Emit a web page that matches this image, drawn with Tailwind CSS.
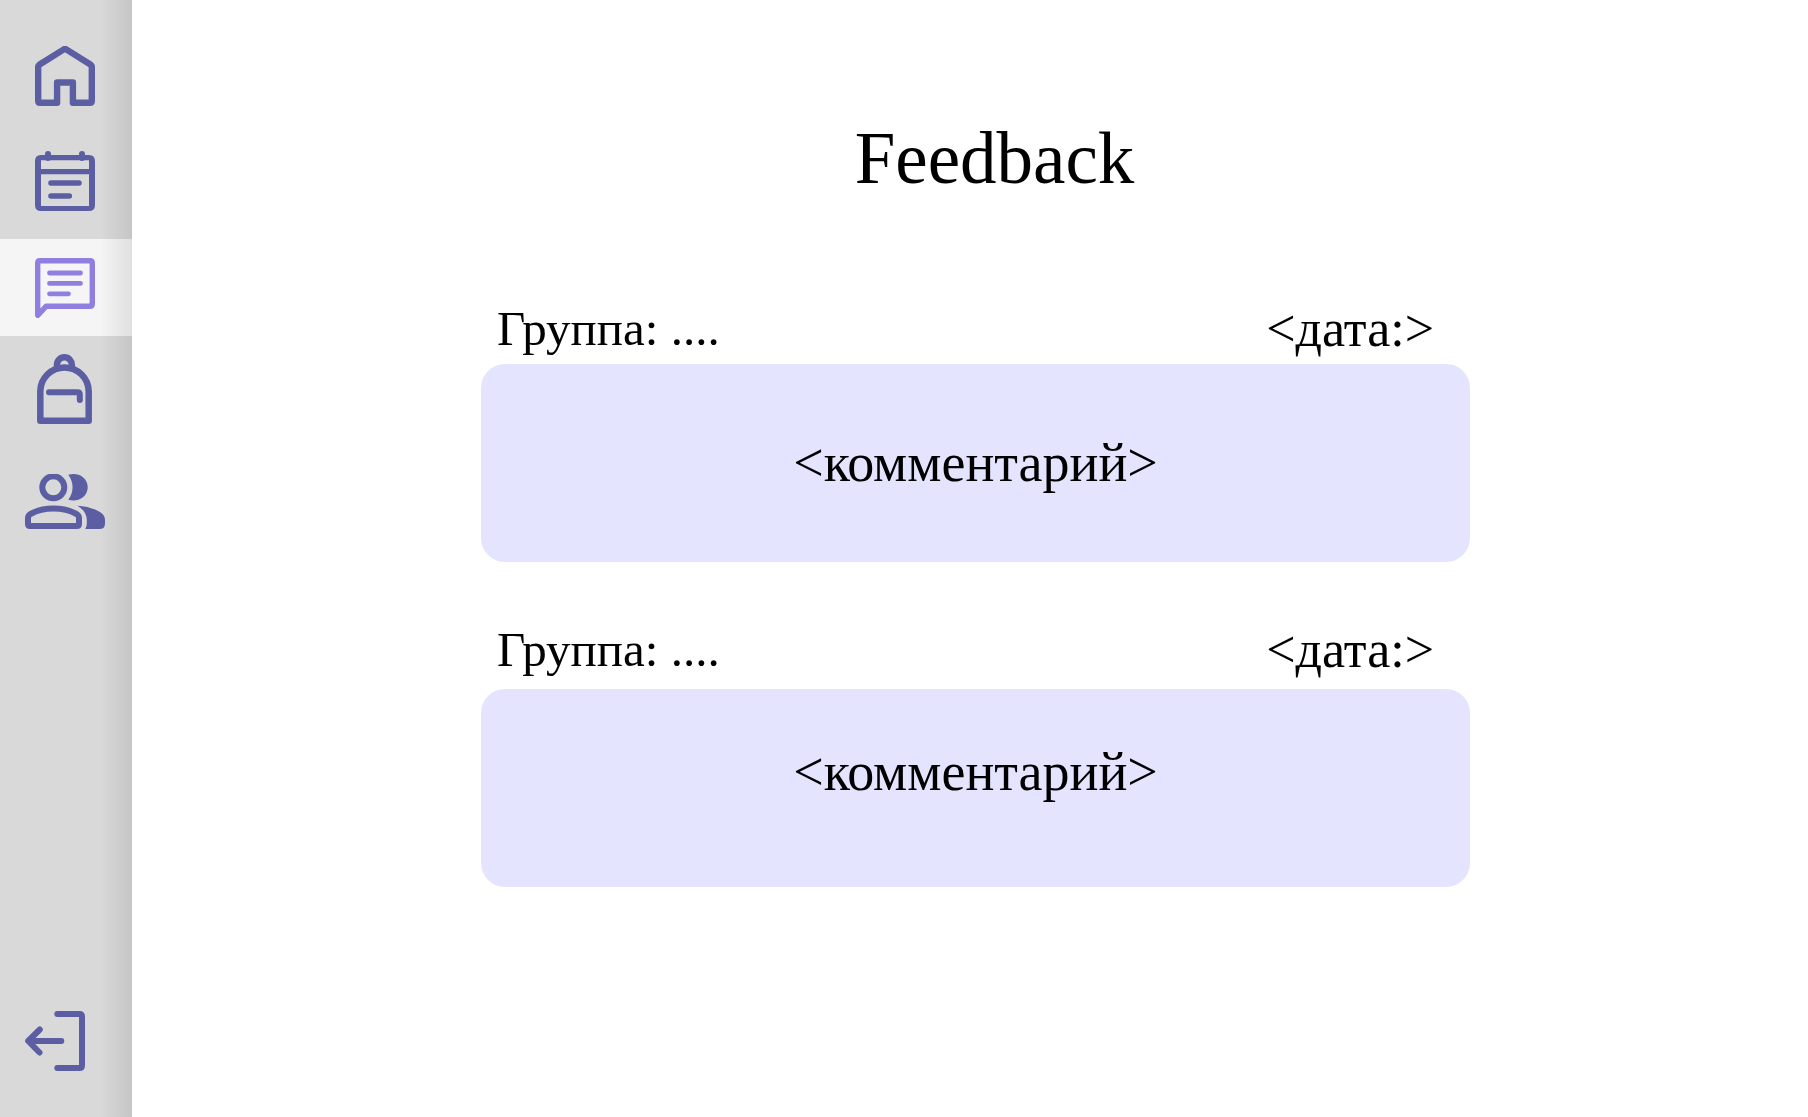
<!DOCTYPE html>
<html lang="ru">
<head>
<meta charset="utf-8">
<meta name="viewport" content="width=device-width, initial-scale=1">
<title>Feedback</title>
<script src="https://cdn.jsdelivr.net/npm/@tailwindcss/browser@4"></script>
</head>
<body class="flex min-h-screen bg-white text-black font-['Liberation_Serif',serif]">
<aside class="relative flex w-33 shrink-0 flex-col justify-between bg-[#d9d9d9] pt-7 pb-[46px] text-[#5c5ea3]">
  <nav class="flex flex-col" aria-label="Меню">
    <a href="#home" aria-label="Главная" class="flex h-24 items-center justify-center pr-0.5">
      <svg width="60" height="60" viewBox="0 0 60 60" fill="none" stroke="currentColor" stroke-width="6.4" stroke-linejoin="round"><path d="M3.2 20.6 Q3.2 19.5 4.2 18.8 L28.4 3.6 Q30 2.6 31.6 3.6 L55.8 18.8 Q56.8 19.5 56.8 20.6 V55 Q56.8 56.8 55 56.8 H37.9 V36.5 H22.1 V56.8 H5 Q3.2 56.8 3.2 55 Z"/></svg>
    </a>
    <a href="#schedule" aria-label="Расписание" class="mt-[9px] flex h-24 items-center justify-center pr-0.5">
      <svg width="60" height="60" viewBox="0 0 60 60" fill="none" stroke="currentColor" stroke-width="6" stroke-linecap="round"><path fill="currentColor" fill-rule="evenodd" stroke="none" d="M6 4 H54 Q60 4 60 10 V54 Q60 60 54 60 H6 Q0 60 0 54 V10 Q0 4 6 4 Z M6 9.3 V18 H54 V9.3 Z M6 23.3 V55 H54 V23.3 Z"/><path d="M13 3 V7 M47 3 V7"/><path stroke-width="5.6" d="M16 32 H44 M16 45 H34.3"/></svg>
    </a>
    <a href="#feedback" aria-label="Feedback" aria-current="page" class="mt-2.5 flex h-[97px] items-center justify-center bg-[#f5f5f5] pr-0.5 text-[#917fe0]">
      <svg width="60" height="60" viewBox="0 0 60 60" fill="none" stroke="currentColor" stroke-width="5.4" stroke-linejoin="round" stroke-linecap="round"><path d="M2.7 57.3 V5 Q2.7 2.7 5 2.7 H55 Q57.3 2.7 57.3 5 V46 Q57.3 48.3 55 48.3 H11 Z"/><path stroke-width="4.8" d="M14.5 15 H45.5 M14.5 25.4 H45.5 M14.5 35.8 H33.5"/></svg>
    </a>
    <a href="#backpack" aria-label="Рюкзак" class="mt-[5px] flex h-24 items-center justify-center pr-1">
      <svg width="55" height="70" viewBox="0 0 55 70" fill="none" stroke="currentColor" stroke-width="6" stroke-linejoin="round" stroke-linecap="round"><path stroke-width="6.5" d="M3.3 66.7 V37.5 A24.2 24 0 0 1 51.7 37.5 V66.7 Z"/><path stroke-width="6.4" stroke-linecap="butt" d="M19.9 14 V11 A7.5 7.8 0 0 1 34.9 11 V14"/><path stroke-width="6" d="M12 38.3 H40.5 Q42.8 38.3 42.8 40.6 V46"/></svg>
    </a>
    <a href="#groups" aria-label="Группы" class="mt-4 flex h-24 items-center justify-center pr-0.5">
      <svg width="80" height="55" viewBox="0 0 80 55" fill="none" stroke="currentColor" stroke-width="6"><circle cx="28.3" cy="13.3" r="11"/><path d="M3 44 C3 42.3 3.8 41 5.5 40 C12 36.5 20 34.6 28.5 34.6 C37 34.6 45 36.5 51.5 40 C53.2 41 54 42.3 54 44 V50 Q54 52 52 52 H5 Q3 52 3 50 Z"/><path fill="currentColor" stroke="none" d="M43.3 .8 C47 -.3 50.5 -.2 53.5 .8 C59 2.6 62.7 7.5 62.7 13.3 C62.7 19 59 24 53.5 25.7 C50.5 26.7 47 26.7 43.3 25.8 C49 18 49 8.5 43.3 .8 Z M52.3 31.7 C61 32 69 34.5 75 38 C78.5 40 80 42.8 80 46 V49.5 Q80 55 74.5 55 H60.3 Q61.8 52.5 61.8 49.5 V46 C61.8 40 58.5 35.5 52.3 31.7 Z"/></svg>
    </a>
  </nav>
  <a href="#logout" aria-label="Выйти" class="pl-[25px]">
    <svg class="block" width="60" height="60" viewBox="0 0 60 60" fill="none" stroke="currentColor" stroke-width="6" stroke-linejoin="round" stroke-linecap="round"><path d="M32.3 3 H54.5 Q57 3 57 5.5 V54.5 Q57 57 54.5 57 H32.3"/><path d="M36.3 30 H4 M14.8 18.5 L3.2 30 L14.5 41.5"/></svg>
  </a>
  <div class="pointer-events-none absolute inset-y-0 right-0 w-8 bg-linear-to-r from-black/0 to-black/9"></div>
</aside>

<main class="min-w-0 flex-1 pt-[117px] pl-[11px]">
  <h1 class="pl-[38px] text-center text-[73px] leading-[84px]">Feedback</h1>
  <div class="mx-auto w-[989px] max-w-full">
    <article class="mt-24">
      <header class="flex justify-between pr-9 pb-1 pl-4 leading-[63px]">
        <h2 class="text-[49px]">Группа: ....</h2>
        <time class="text-[52px]">&lt;дата:&gt;</time>
      </header>
      <div class="flex h-[198px] items-center justify-center rounded-3xl bg-[#e5e4ff]">
        <p class="text-[54px] leading-[60px]">&lt;комментарий&gt;</p>
      </div>
    </article>
    <article class="mt-14">
      <header class="flex justify-between pr-9 pb-2 pl-4 leading-[63px]">
        <h2 class="text-[49px]">Группа: ....</h2>
        <time class="text-[52px]">&lt;дата:&gt;</time>
      </header>
      <div class="flex h-[198px] items-center justify-center rounded-3xl bg-[#e5e4ff] pb-8">
        <p class="text-[54px] leading-[60px]">&lt;комментарий&gt;</p>
      </div>
    </article>
  </div>
</main>
</body>
</html>
